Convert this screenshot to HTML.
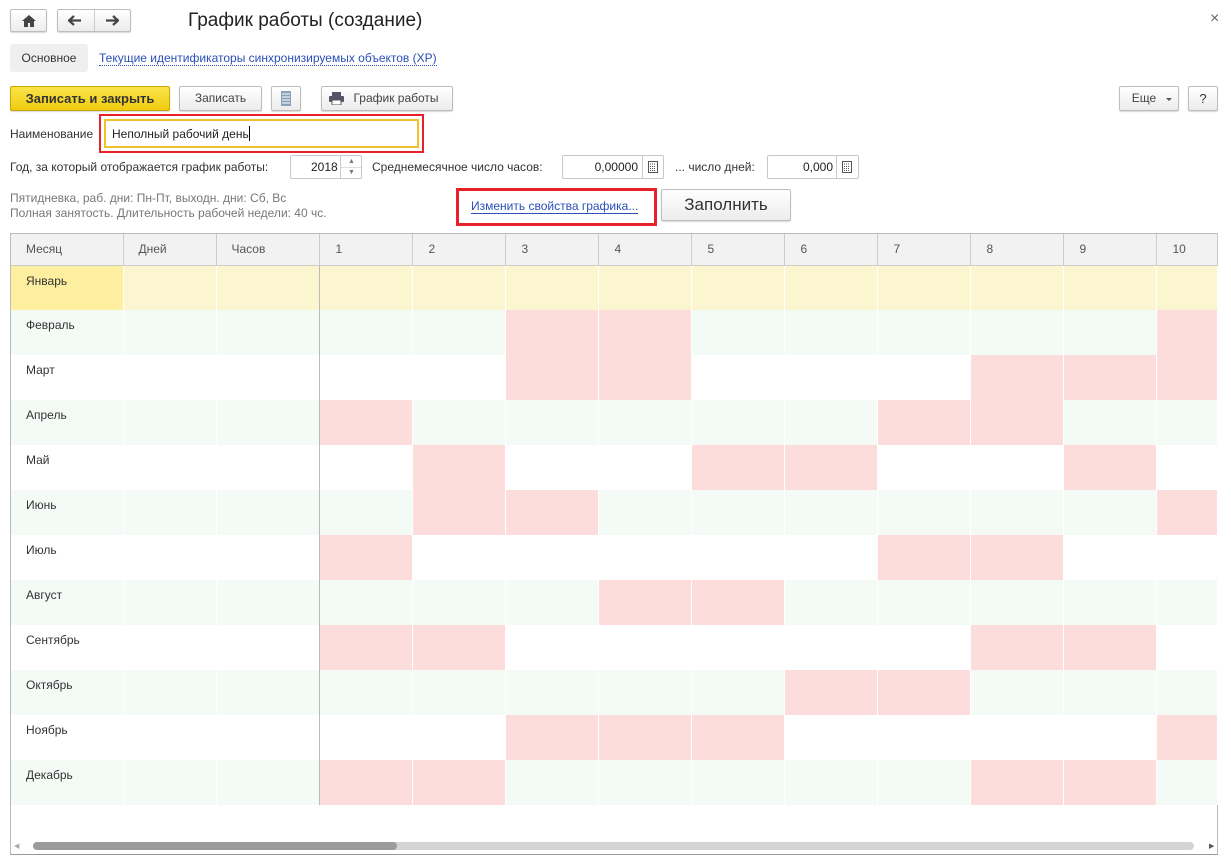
<!DOCTYPE html>
<html><head><meta charset="utf-8">
<style>
*{box-sizing:border-box}
body{margin:0;width:1231px;height:859px;background:#fff;font-family:"Liberation Sans",Arial,sans-serif;font-size:12px;color:#333;position:relative;overflow:hidden}
.a{position:absolute}
.btn{position:absolute;border:1px solid #bdbdbd;border-radius:2px;background:linear-gradient(#fff,#ececec);box-shadow:0 1px 1px rgba(0,0,0,.15);text-align:center;color:#444}
.inp{position:absolute;border:1px solid #c8c8c8;border-radius:2px;background:#fff}
table{position:absolute;left:11px;top:234px;border-collapse:collapse;table-layout:fixed;width:1206px}
td,th{padding:0;height:45px;border-right:1px solid #fff;vertical-align:top;text-align:left;font-weight:normal}
th{height:31px;background:#f2f2f2;border-right:1px solid #ccc;border-bottom:1px solid #ccc;vertical-align:middle;color:#555;padding-left:15px}
th:nth-child(n+4){padding-left:16px}
td:first-child{padding:8px 0 0 15px;color:#333}
td:nth-child(3){border-right:1px solid #bbb}
tr.g td{background:#f4faf6}
tr.w td{background:#fff}
tr.y td{background:#fcf6d0}
tr.y td:first-child{background:#fdef9f}
td.p{background:#fddcdc!important}
</style></head><body>
<div class="btn" style="left:10px;top:9px;width:37px;height:23px"><svg width="14" height="12" viewBox="0 0 14 12" style="margin-top:5px"><path d="M7 0L0 6h2v6h4V8h2v4h4V6h2z" fill="#444"/></svg></div>
<div class="btn" style="left:57px;top:9px;width:74px;height:23px"></div>
<div class="a" style="left:94px;top:10px;width:1px;height:21px;background:#ccc"></div>
<svg class="a" style="left:68px;top:15px" width="14" height="11" viewBox="0 0 14 11"><path d="M1 5.5h12M6 1L1 5.5 6 10" stroke="#444" stroke-width="2.2" fill="none"/></svg>
<svg class="a" style="left:105px;top:15px" width="14" height="11" viewBox="0 0 14 11"><path d="M1 5.5h12M8 1l5 4.5L8 10" stroke="#444" stroke-width="2.2" fill="none"/></svg>
<div class="a" style="left:188px;top:10px;font-size:19px;color:#222">График работы (создание)</div>
<div class="a" style="left:1210px;top:10px;font-size:16px;color:#666">×</div>
<div class="a" style="left:10px;top:44px;width:78px;height:28px;background:#efefef;border-radius:3px;line-height:28px;text-align:center;color:#333">Основное</div>
<div class="a" style="left:99px;top:51px;color:#2b4fb8;border-bottom:1px dotted #2b4fb8;line-height:14px">Текущие идентификаторы синхронизируемых объектов (XP)</div>
<div class="btn" style="left:10px;top:86px;width:160px;height:25px;background:linear-gradient(#fbe44a,#f0cc0e);border-color:#c9a800;font-weight:bold;color:#333;line-height:23px;font-size:13px">Записать и закрыть</div>
<div class="btn" style="left:179px;top:86px;width:83px;height:25px;line-height:23px">Записать</div>
<div class="btn" style="left:271px;top:86px;width:30px;height:25px"><svg width="10" height="15" viewBox="0 0 10 15" style="margin-top:4px"><rect x="0" y="0" width="10" height="15" fill="#8aa0b8"/><path d="M1 3h8M1 6h8M1 9h8M1 12h8" stroke="#fff" stroke-width="1"/></svg></div>
<div class="btn" style="left:321px;top:86px;width:132px;height:25px;line-height:23px;padding-left:18px">График работы</div>
<svg class="a" style="left:329px;top:92px" width="15" height="13" viewBox="0 0 15 13"><rect x="3" y="0" width="9" height="4" fill="#556"/><rect x="0" y="4" width="15" height="6" rx="1" fill="#556"/><rect x="3" y="8" width="9" height="5" fill="#fff" stroke="#556"/></svg>
<div class="btn" style="left:1119px;top:86px;width:60px;height:25px;line-height:23px;padding-right:10px">Еще</div>
<div class="a" style="left:1166px;top:98px;border:3px solid transparent;border-top:3px solid #555"></div>
<div class="btn" style="left:1188px;top:86px;width:30px;height:25px;line-height:23px;font-size:13px;color:#333">?</div>
<div class="a" style="left:10px;top:127px">Наименование</div>
<div class="a" style="left:99px;top:114px;width:325px;height:39px;border:2px solid #e8202a"></div>
<div class="a" style="left:104px;top:119px;width:315px;height:29px;border:2px solid #f2c12e;background:#fff;padding:5px 0 0 6px;color:#222">Неполный рабочий день<span style="display:inline-block;width:1px;height:15px;background:#000;vertical-align:-3px"></span></div>
<div class="a" style="left:10px;top:160px">Год, за который отображается график работы:</div>
<div class="inp" style="left:290px;top:155px;width:72px;height:24px;padding:4px 0 0 20px;color:#222">2018</div>
<div class="a" style="left:340px;top:156px;width:1px;height:22px;background:#ccc"></div>
<div class="a" style="left:341px;top:167px;width:20px;height:1px;background:#ddd"></div>
<div class="a" style="left:348px;top:158px;font-size:7px;color:#777">▲</div>
<div class="a" style="left:348px;top:169px;font-size:7px;color:#777">▼</div>
<div class="a" style="left:372px;top:160px">Среднемесячное число часов:</div>
<div class="inp" style="left:562px;top:155px;width:102px;height:24px;padding:4px 25px 0 0;text-align:right;color:#222">0,00000</div>
<div class="a" style="left:642px;top:156px;width:1px;height:22px;background:#ccc"></div>
<svg class="a" style="left:648px;top:161px" width="10" height="12"><rect x=".5" y=".5" width="9" height="11" fill="none" stroke="#555"/><path d="M2 3h6M2 5.5h6M2 7.5h6M2 9.5h6" stroke="#555" stroke-dasharray="1 1"/></svg>
<div class="a" style="left:675px;top:160px">... число дней:</div>
<div class="inp" style="left:767px;top:155px;width:92px;height:24px;padding:4px 25px 0 0;text-align:right;color:#222">0,000</div>
<div class="a" style="left:836px;top:156px;width:1px;height:22px;background:#ccc"></div>
<svg class="a" style="left:842px;top:161px" width="10" height="12"><rect x=".5" y=".5" width="9" height="11" fill="none" stroke="#555"/><path d="M2 3h6M2 5.5h6M2 7.5h6M2 9.5h6" stroke="#555" stroke-dasharray="1 1"/></svg>
<div class="a" style="left:10px;top:191px;color:#777;line-height:15px">Пятидневка, раб. дни: Пн-Пт, выходн. дни: Сб, Вс<br>Полная занятость. Длительность рабочей недели: 40 чс.</div>
<div class="a" style="left:456px;top:188px;width:201px;height:38px;border:3px solid #e8202a"></div>
<div class="a" style="left:471px;top:200px;color:#2b4fb8;border-bottom:1px solid #2b4fb8;line-height:13px">Изменить свойства графика...</div>
<div class="btn" style="left:661px;top:189px;width:130px;height:32px;line-height:30px;font-size:17px;color:#333">Заполнить</div>
<div class="a" style="left:10px;top:233px;width:1208px;height:622px;border:1px solid #bbb;border-bottom-color:#999"></div>
<table>
<colgroup><col style="width:112px"><col style="width:93px"><col style="width:103px"><col style="width:93px"><col style="width:93px"><col style="width:93px"><col style="width:93px"><col style="width:93px"><col style="width:93px"><col style="width:93px"><col style="width:93px"><col style="width:93px"><col style="width:61px"></colgroup>
<tr><th style="height:31px">Месяц</th><th>Дней</th><th>Часов</th><th>1</th><th>2</th><th>3</th><th>4</th><th>5</th><th>6</th><th>7</th><th>8</th><th>9</th><th>10</th></tr>
<tr class="y"><td>Январь</td><td></td><td></td><td></td><td></td><td></td><td></td><td></td><td></td><td></td><td></td><td></td><td></td></tr>
<tr class="g"><td>Февраль</td><td></td><td></td><td></td><td></td><td class="p"></td><td class="p"></td><td></td><td></td><td></td><td></td><td></td><td class="p"></td></tr>
<tr class="w"><td>Март</td><td></td><td></td><td></td><td></td><td class="p"></td><td class="p"></td><td></td><td></td><td></td><td class="p"></td><td class="p"></td><td class="p"></td></tr>
<tr class="g"><td>Апрель</td><td></td><td></td><td class="p"></td><td></td><td></td><td></td><td></td><td></td><td class="p"></td><td class="p"></td><td></td><td></td></tr>
<tr class="w"><td>Май</td><td></td><td></td><td></td><td class="p"></td><td></td><td></td><td class="p"></td><td class="p"></td><td></td><td></td><td class="p"></td><td></td></tr>
<tr class="g"><td>Июнь</td><td></td><td></td><td></td><td class="p"></td><td class="p"></td><td></td><td></td><td></td><td></td><td></td><td></td><td class="p"></td></tr>
<tr class="w"><td>Июль</td><td></td><td></td><td class="p"></td><td></td><td></td><td></td><td></td><td></td><td class="p"></td><td class="p"></td><td></td><td></td></tr>
<tr class="g"><td>Август</td><td></td><td></td><td></td><td></td><td></td><td class="p"></td><td class="p"></td><td></td><td></td><td></td><td></td><td></td></tr>
<tr class="w"><td>Сентябрь</td><td></td><td></td><td class="p"></td><td class="p"></td><td></td><td></td><td></td><td></td><td></td><td class="p"></td><td class="p"></td><td></td></tr>
<tr class="g"><td>Октябрь</td><td></td><td></td><td></td><td></td><td></td><td></td><td></td><td class="p"></td><td class="p"></td><td></td><td></td><td></td></tr>
<tr class="w"><td>Ноябрь</td><td></td><td></td><td></td><td></td><td class="p"></td><td class="p"></td><td class="p"></td><td></td><td></td><td></td><td></td><td class="p"></td></tr>
<tr class="g"><td>Декабрь</td><td></td><td></td><td class="p"></td><td class="p"></td><td></td><td></td><td></td><td></td><td></td><td class="p"></td><td class="p"></td><td></td></tr>
</table>
<div class="a" style="left:14px;top:842px;font-size:7px;color:#aaa">◀</div>
<div class="a" style="left:33px;top:842px;width:1161px;height:8px;border-radius:4px;background:#d4d4d4"></div>
<div class="a" style="left:33px;top:842px;width:364px;height:8px;border-radius:4px;background:#9b9b9b"></div>
<div class="a" style="left:1209px;top:842px;font-size:7px;color:#555">▶</div>
</body></html>
